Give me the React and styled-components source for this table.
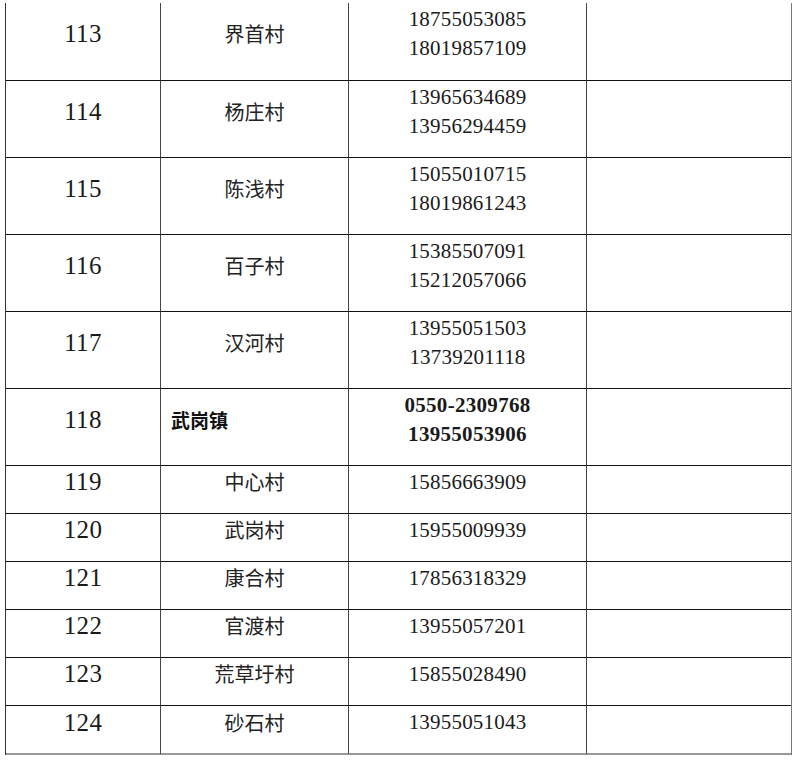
import React from 'react';
import styled, { createGlobalStyle } from 'styled-components';

const GlobalStyle = createGlobalStyle`
  html, body {
    margin: 0;
    padding: 0;
    background: #fff;
  }
  body {
    font-family: "Liberation Serif", "Noto Sans CJK SC", serif;
    color: #1a1a1a;
  }
`;

const Page = styled.div`
  padding: 3px 0 0 5px;
  width: 797px;
  height: 762px;
  box-sizing: border-box;
  overflow: hidden;
`;

const Table = styled.div`
  display: grid;
  grid-template-columns: 155px 188px 238px 204px;
  width: 785px;
  border-left: 1px solid #333;
  border-right: 1px solid #777;
`;

const Cell = styled.div`
  box-sizing: border-box;
  height: ${(p) => p.$h}px;
  border-bottom: ${(p) => (p.$last ? '2px solid #999' : '1px solid #111')};
  border-right: ${(p) => (p.$end ? 'none' : '1px solid #444')};
  display: flex;
  flex-direction: column;
  justify-content: center;
  align-items: ${(p) => (p.$left ? 'flex-start' : 'center')};
  padding: 0 0 ${(p) => (p.$last ? 14 : 15)}px ${(p) => (p.$left ? 10 : 0)}px;
  font-weight: ${(p) => (p.$bold ? 700 : 400)};
`;

const Num = styled.span`
  font-size: 25px;
  line-height: 30px;
  letter-spacing: 0.3px;
`;

const Name = styled.span`
  font-family: "Noto Sans CJK SC", sans-serif;
  font-size: ${(p) => (p.$bold ? 19 : 20)}px;
  line-height: 30px;
  color: ${(p) => (p.$bold ? '#111' : '#222')};
`;

const Phone = styled.span`
  font-size: ${(p) => (p.$bold ? 21 : 21)}px;
  line-height: 29px;
  letter-spacing: ${(p) => (p.$bold ? 0.3 : 0.2)}px;
`;

const rows = [
  { no: 113, name: '界首村', phones: ['18755053085', '18019857109'], h: 78 },
  { no: 114, name: '杨庄村', phones: ['13965634689', '13956294459'], h: 77 },
  { no: 115, name: '陈浅村', phones: ['15055010715', '18019861243'], h: 77 },
  { no: 116, name: '百子村', phones: ['15385507091', '15212057066'], h: 77 },
  { no: 117, name: '汉河村', phones: ['13955051503', '13739201118'], h: 77 },
  { no: 118, name: '武岗镇', phones: ['0550-2309768', '13955053906'], h: 77, town: true },
  { no: 119, name: '中心村', phones: ['15856663909'], h: 48 },
  { no: 120, name: '武岗村', phones: ['15955009939'], h: 48 },
  { no: 121, name: '康合村', phones: ['17856318329'], h: 48 },
  { no: 122, name: '官渡村', phones: ['13955057201'], h: 48 },
  { no: 123, name: '荒草圩村', phones: ['15855028490'], h: 48 },
  { no: 124, name: '砂石村', phones: ['13955051043'], h: 49 },
];

export default function App() {
  return (
    <Page>
      <GlobalStyle />
      <Table>
        {rows.map((r, i) => {
          const last = i === rows.length - 1;
          return (
            <React.Fragment key={r.no}>
              <Cell $h={r.h} $last={last}>
                <Num>{r.no}</Num>
              </Cell>
              <Cell $h={r.h} $last={last} $left={r.town} $bold={r.town}>
                <Name $bold={r.town}>{r.name}</Name>
              </Cell>
              <Cell $h={r.h} $last={last} $bold={r.town}>
                {r.phones.map((p) => (
                  <Phone key={p} $bold={r.town}>
                    {p}
                  </Phone>
                ))}
              </Cell>
              <Cell $h={r.h} $last={last} $end />
            </React.Fragment>
          );
        })}
      </Table>
    </Page>
  );
}
